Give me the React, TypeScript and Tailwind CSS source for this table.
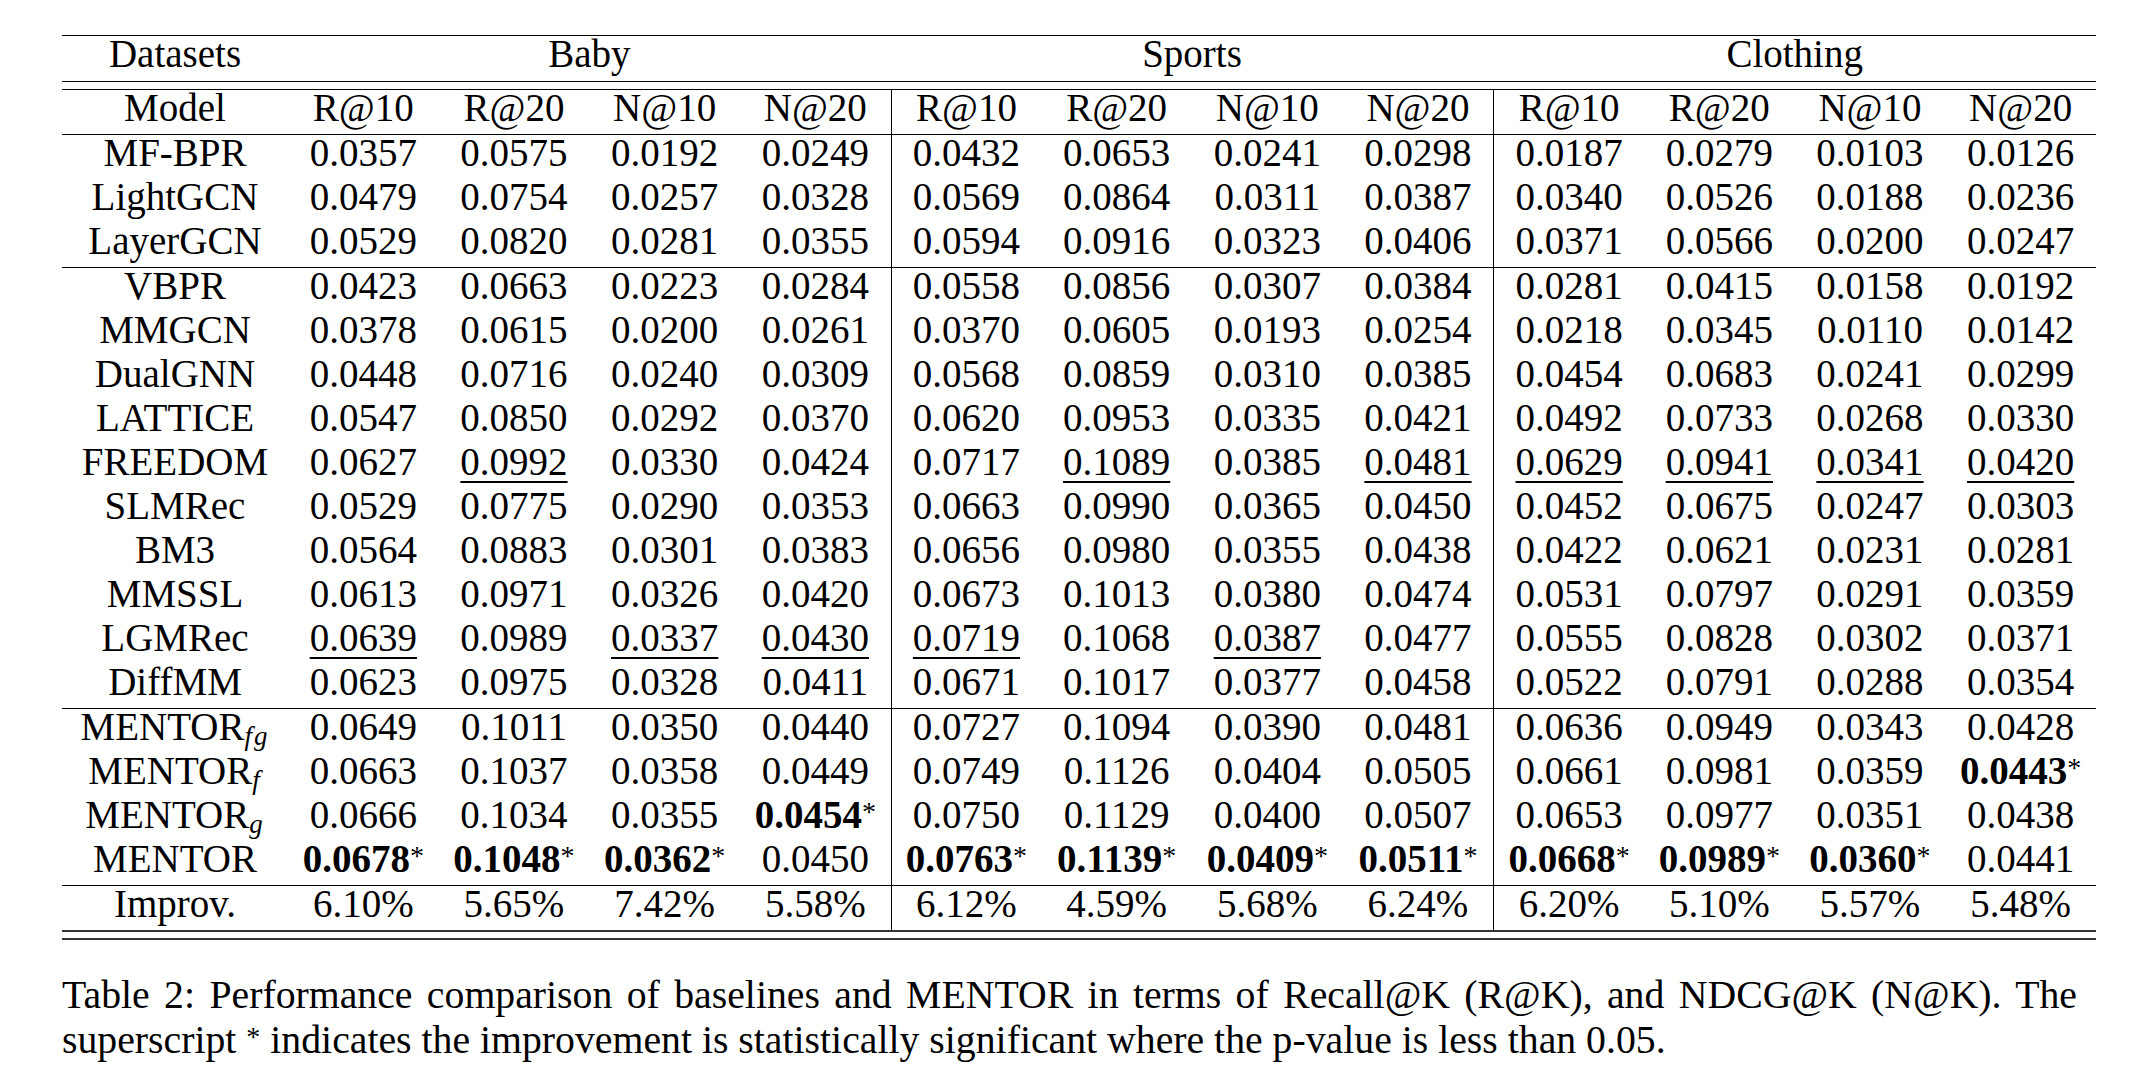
import React from 'react';

// table rows — "_" prefix = underlined (second best), "*" suffix = bold + significance star
type Row = { name: React.ReactNode; vals: string[] };

const SECTIONS: Row[][] = [
  [
    { name: 'MF-BPR', vals: ['0.0357', '0.0575', '0.0192', '0.0249', '0.0432', '0.0653', '0.0241', '0.0298', '0.0187', '0.0279', '0.0103', '0.0126'] },
    { name: 'LightGCN', vals: ['0.0479', '0.0754', '0.0257', '0.0328', '0.0569', '0.0864', '0.0311', '0.0387', '0.0340', '0.0526', '0.0188', '0.0236'] },
    { name: 'LayerGCN', vals: ['0.0529', '0.0820', '0.0281', '0.0355', '0.0594', '0.0916', '0.0323', '0.0406', '0.0371', '0.0566', '0.0200', '0.0247'] },
  ],
  [
    { name: 'VBPR', vals: ['0.0423', '0.0663', '0.0223', '0.0284', '0.0558', '0.0856', '0.0307', '0.0384', '0.0281', '0.0415', '0.0158', '0.0192'] },
    { name: 'MMGCN', vals: ['0.0378', '0.0615', '0.0200', '0.0261', '0.0370', '0.0605', '0.0193', '0.0254', '0.0218', '0.0345', '0.0110', '0.0142'] },
    { name: 'DualGNN', vals: ['0.0448', '0.0716', '0.0240', '0.0309', '0.0568', '0.0859', '0.0310', '0.0385', '0.0454', '0.0683', '0.0241', '0.0299'] },
    { name: 'LATTICE', vals: ['0.0547', '0.0850', '0.0292', '0.0370', '0.0620', '0.0953', '0.0335', '0.0421', '0.0492', '0.0733', '0.0268', '0.0330'] },
    { name: 'FREEDOM', vals: ['0.0627', '_0.0992', '0.0330', '0.0424', '0.0717', '_0.1089', '0.0385', '_0.0481', '_0.0629', '_0.0941', '_0.0341', '_0.0420'] },
    { name: 'SLMRec', vals: ['0.0529', '0.0775', '0.0290', '0.0353', '0.0663', '0.0990', '0.0365', '0.0450', '0.0452', '0.0675', '0.0247', '0.0303'] },
    { name: 'BM3', vals: ['0.0564', '0.0883', '0.0301', '0.0383', '0.0656', '0.0980', '0.0355', '0.0438', '0.0422', '0.0621', '0.0231', '0.0281'] },
    { name: 'MMSSL', vals: ['0.0613', '0.0971', '0.0326', '0.0420', '0.0673', '0.1013', '0.0380', '0.0474', '0.0531', '0.0797', '0.0291', '0.0359'] },
    { name: 'LGMRec', vals: ['_0.0639', '0.0989', '_0.0337', '_0.0430', '_0.0719', '0.1068', '_0.0387', '0.0477', '0.0555', '0.0828', '0.0302', '0.0371'] },
    { name: 'DiffMM', vals: ['0.0623', '0.0975', '0.0328', '0.0411', '0.0671', '0.1017', '0.0377', '0.0458', '0.0522', '0.0791', '0.0288', '0.0354'] },
  ],
  [
    { name: <Mentor sub="fg" />, vals: ['0.0649', '0.1011', '0.0350', '0.0440', '0.0727', '0.1094', '0.0390', '0.0481', '0.0636', '0.0949', '0.0343', '0.0428'] },
    { name: <Mentor sub="f" />, vals: ['0.0663', '0.1037', '0.0358', '0.0449', '0.0749', '0.1126', '0.0404', '0.0505', '0.0661', '0.0981', '0.0359', '0.0443*'] },
    { name: <Mentor sub="g" />, vals: ['0.0666', '0.1034', '0.0355', '0.0454*', '0.0750', '0.1129', '0.0400', '0.0507', '0.0653', '0.0977', '0.0351', '0.0438'] },
    { name: 'MENTOR', vals: ['0.0678*', '0.1048*', '0.0362*', '0.0450', '0.0763*', '0.1139*', '0.0409*', '0.0511*', '0.0668*', '0.0989*', '0.0360*', '0.0441'] },
  ],
  [
    { name: 'Improv.', vals: ['6.10%', '5.65%', '7.42%', '5.58%', '6.12%', '4.59%', '5.68%', '6.24%', '6.20%', '5.10%', '5.57%', '5.48%'] },
  ],
];

const METRICS = ['R@10', 'R@20', 'N@10', 'N@20'];

function Mentor({ sub }: { sub: string }) {
  return (
    <span>
      MENTOR<sub className="italic text-[27px] tracking-[2px] bottom-[-0.2em]">{sub}</sub>
    </span>
  );
}

function Val({ v }: { v: string }) {
  if (v.startsWith('_')) {
    return <span className="underline decoration-[1.5px] underline-offset-[6px]">{v.slice(1)}</span>;
  }
  if (v.endsWith('*')) {
    return (
      <span>
        <b className="font-bold">{v.slice(0, -1)}</b>
        <sup className="text-[28px] top-[-0.25em]">*</sup>
      </span>
    );
  }
  return <>{v}</>;
}

// group boundary: Sports and Clothing start with a vertical rule
function cellClass(i: number) {
  return i === 4 || i === 8 ? 'text-center whitespace-nowrap border-l border-black' : 'text-center whitespace-nowrap';
}

function Rule() {
  return <div className="h-px bg-black" />;
}

export default function App() {
  return (
    <div className="min-h-screen bg-white text-black font-['Liberation_Serif',serif]">
      <div className="ml-[62px] pt-[35px] w-[2034px] text-[39px]">
        <Rule />
        {/* dataset row — no vertical rules here */}
        <div className="grid grid-cols-[226px_repeat(12,minmax(0,1fr))] h-[45px] leading-[36px]">
          <div className="text-center">Datasets</div>
          <div className="col-span-4 text-center">Baby</div>
          <div className="col-span-4 text-center">Sports</div>
          <div className="col-span-4 text-center">Clothing</div>
        </div>
        <Rule />
        <div className="h-[7px]" />
        <Rule />
        <div className="grid grid-cols-[226px_repeat(12,minmax(0,1fr))] h-[44px] leading-[36px]">
          <div className="text-center">Model</div>
          {[0, 1, 2].flatMap((g) =>
            METRICS.map((m, j) => (
              <div key={`${g}-${j}`} className={cellClass(g * 4 + j)}>
                {m}
              </div>
            ))
          )}
        </div>
        {SECTIONS.map((rows, si) => (
          <div key={si}>
            <Rule />
            {rows.map((r, ri) => (
              <div key={ri} className="grid grid-cols-[226px_repeat(12,minmax(0,1fr))] h-[44px] leading-[36px]">
                <div className="text-center whitespace-nowrap">{r.name}</div>
                {r.vals.map((v, i) => (
                  <div key={i} className={cellClass(i)}>
                    <Val v={v} />
                  </div>
                ))}
              </div>
            ))}
          </div>
        ))}
        <div className="h-[2px] bg-[#333]" />
        <div className="h-[6px]" />
        <div className="h-[2px] bg-[#333]" />
      </div>

      <p className="ml-[62px] mt-[33px] w-[2015px] text-[39.75px] leading-[45px] text-justify">
        Table 2: Performance comparison of baselines and MENTOR in terms of Recall@K (R@K), and NDCG@K (N@K). The
        superscript <sup className="text-[28px] top-[-0.25em]">*</sup> indicates the improvement is statistically
        significant where the p-value is less than 0.05.
      </p>
    </div>
  );
}
